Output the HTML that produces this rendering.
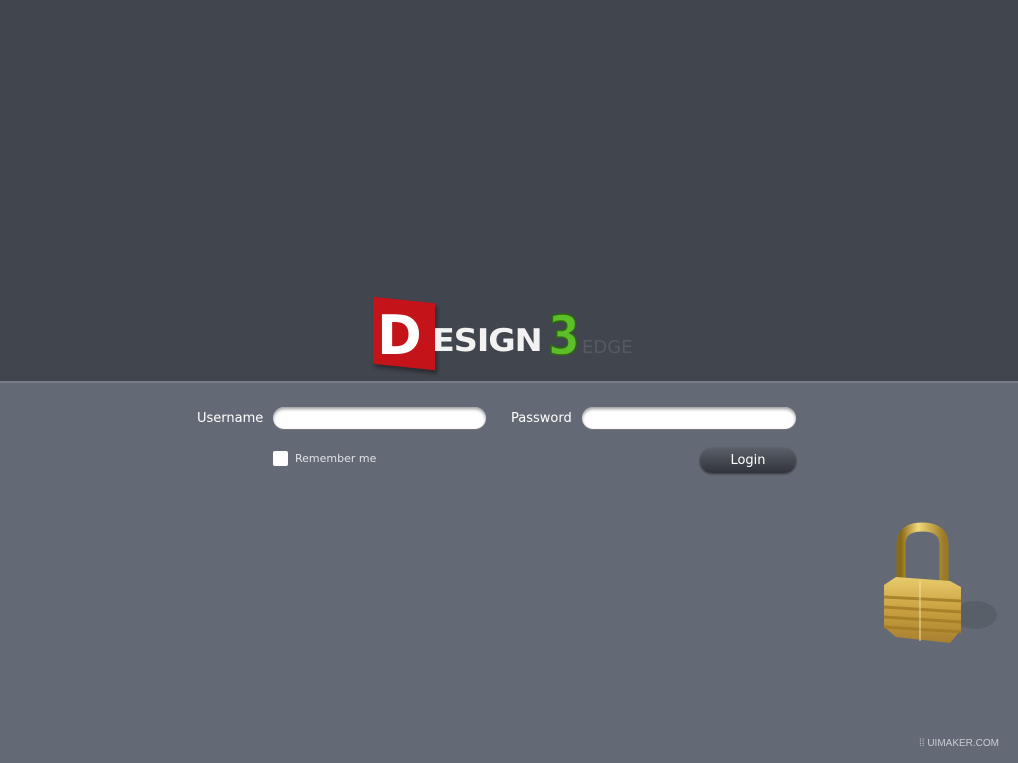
<!DOCTYPE html>
<html><head><meta charset="utf-8"><style>
*{margin:0;padding:0;box-sizing:border-box}
body{width:1018px;height:763px;position:relative;overflow:hidden;background:#646a75;font-family:"DejaVu Sans","Liberation Sans",sans-serif}
.top{position:absolute;left:0;top:0;width:1018px;height:381px;background:#41454d}
.line{position:absolute;left:0;top:381px;width:1018px;height:2px;background:#787e89}
.lbl{position:absolute;color:#fff;font-size:13px}
.inp{position:absolute;height:22px;border-radius:11px;background:#fff;box-shadow:inset 0 2px 3px #999,0 1px 0 #777}
.btn{position:absolute;left:700px;top:448px;width:96px;height:25px;border-radius:12px;background:linear-gradient(#5a5f68,#30333a);box-shadow:0 1px 2px #333;color:#fff;font-size:13px;text-align:center;line-height:25px}
</style></head><body>
<div class="top"></div><div class="line"></div>
<div style="position:absolute;left:373px;top:300px;width:62px;height:67px;background:#c4141a;transform:skewY(6deg);box-shadow:2px 3px 4px rgba(0,0,0,.4)"></div>
<div style="position:absolute;left:377px;top:306px;font:bold 54px/60px 'DejaVu Sans',sans-serif;color:#fff;letter-spacing:-2px">D</div>
<div style="position:absolute;left:432px;top:323px;font:bold 31px/36px 'DejaVu Sans',sans-serif;color:#f2f2f2;letter-spacing:-1px;transform:scaleX(1.08);transform-origin:left">ESIGN</div>
<div style="position:absolute;left:548px;top:308px;font:bold 54px/56px 'DejaVu Sans',sans-serif;color:#5cbf2a;-webkit-text-stroke:1.5px #2d6a10;transform:scaleX(0.85);transform-origin:left">3</div>
<div style="position:absolute;left:582px;top:337px;font:18px/22px 'DejaVu Sans',sans-serif;color:#555960">EDGE</div>
<div class="lbl" style="left:197px;top:411px">Username</div>
<div class="inp" style="left:273px;top:407px;width:213px"></div>
<div class="lbl" style="left:511px;top:411px">Password</div>
<div class="inp" style="left:582px;top:407px;width:214px"></div>
<div style="position:absolute;left:273px;top:451px;width:15px;height:15px;background:#fff;border-radius:2px"></div>
<div class="lbl" style="left:295px;top:452px;font-size:11px;color:#dfe1e4">Remember me</div>
<div class="btn">Login</div>
<svg style="position:absolute;left:870px;top:515px" width="140" height="140" viewBox="0 0 140 140">
<defs>
<linearGradient id="g" x1="0" x2="1"><stop offset="0" stop-color="#8a6a18"/><stop offset=".4" stop-color="#f3d97a"/><stop offset="1" stop-color="#9a7a25"/></linearGradient>
<linearGradient id="b" x1="0" y1="0" x2="0" y2="1"><stop offset="0" stop-color="#e8cb6c"/><stop offset=".5" stop-color="#c9a040"/><stop offset="1" stop-color="#a88030"/></linearGradient>
</defs>
<ellipse cx="105" cy="100" rx="22" ry="14" fill="rgba(0,0,0,.1)"/>
<path d="M31 68 V30 Q31 12 52 12 Q74 12 74 30 V68" fill="none" stroke="url(#g)" stroke-width="9"/>
<path d="M14 70 L26 62 L80 66 L91 72 V115 L80 128 L26 122 L14 112 Z" fill="url(#b)"/>
<g stroke="#a07a25" stroke-width="3" opacity=".8">
<line x1="14" y1="82" x2="91" y2="86"/><line x1="14" y1="92" x2="91" y2="97"/><line x1="14" y1="102" x2="91" y2="107"/><line x1="14" y1="112" x2="91" y2="117"/></g>
<line x1="50" y1="66" x2="50" y2="126" stroke="#f5e29a" stroke-width="1"/>
</svg>
<div style="position:absolute;left:919px;top:738px;font-size:10px;color:#c9ccd2;font-family:'Liberation Sans',sans-serif">⁞⁞ UIMAKER.COM</div>
</body></html>
